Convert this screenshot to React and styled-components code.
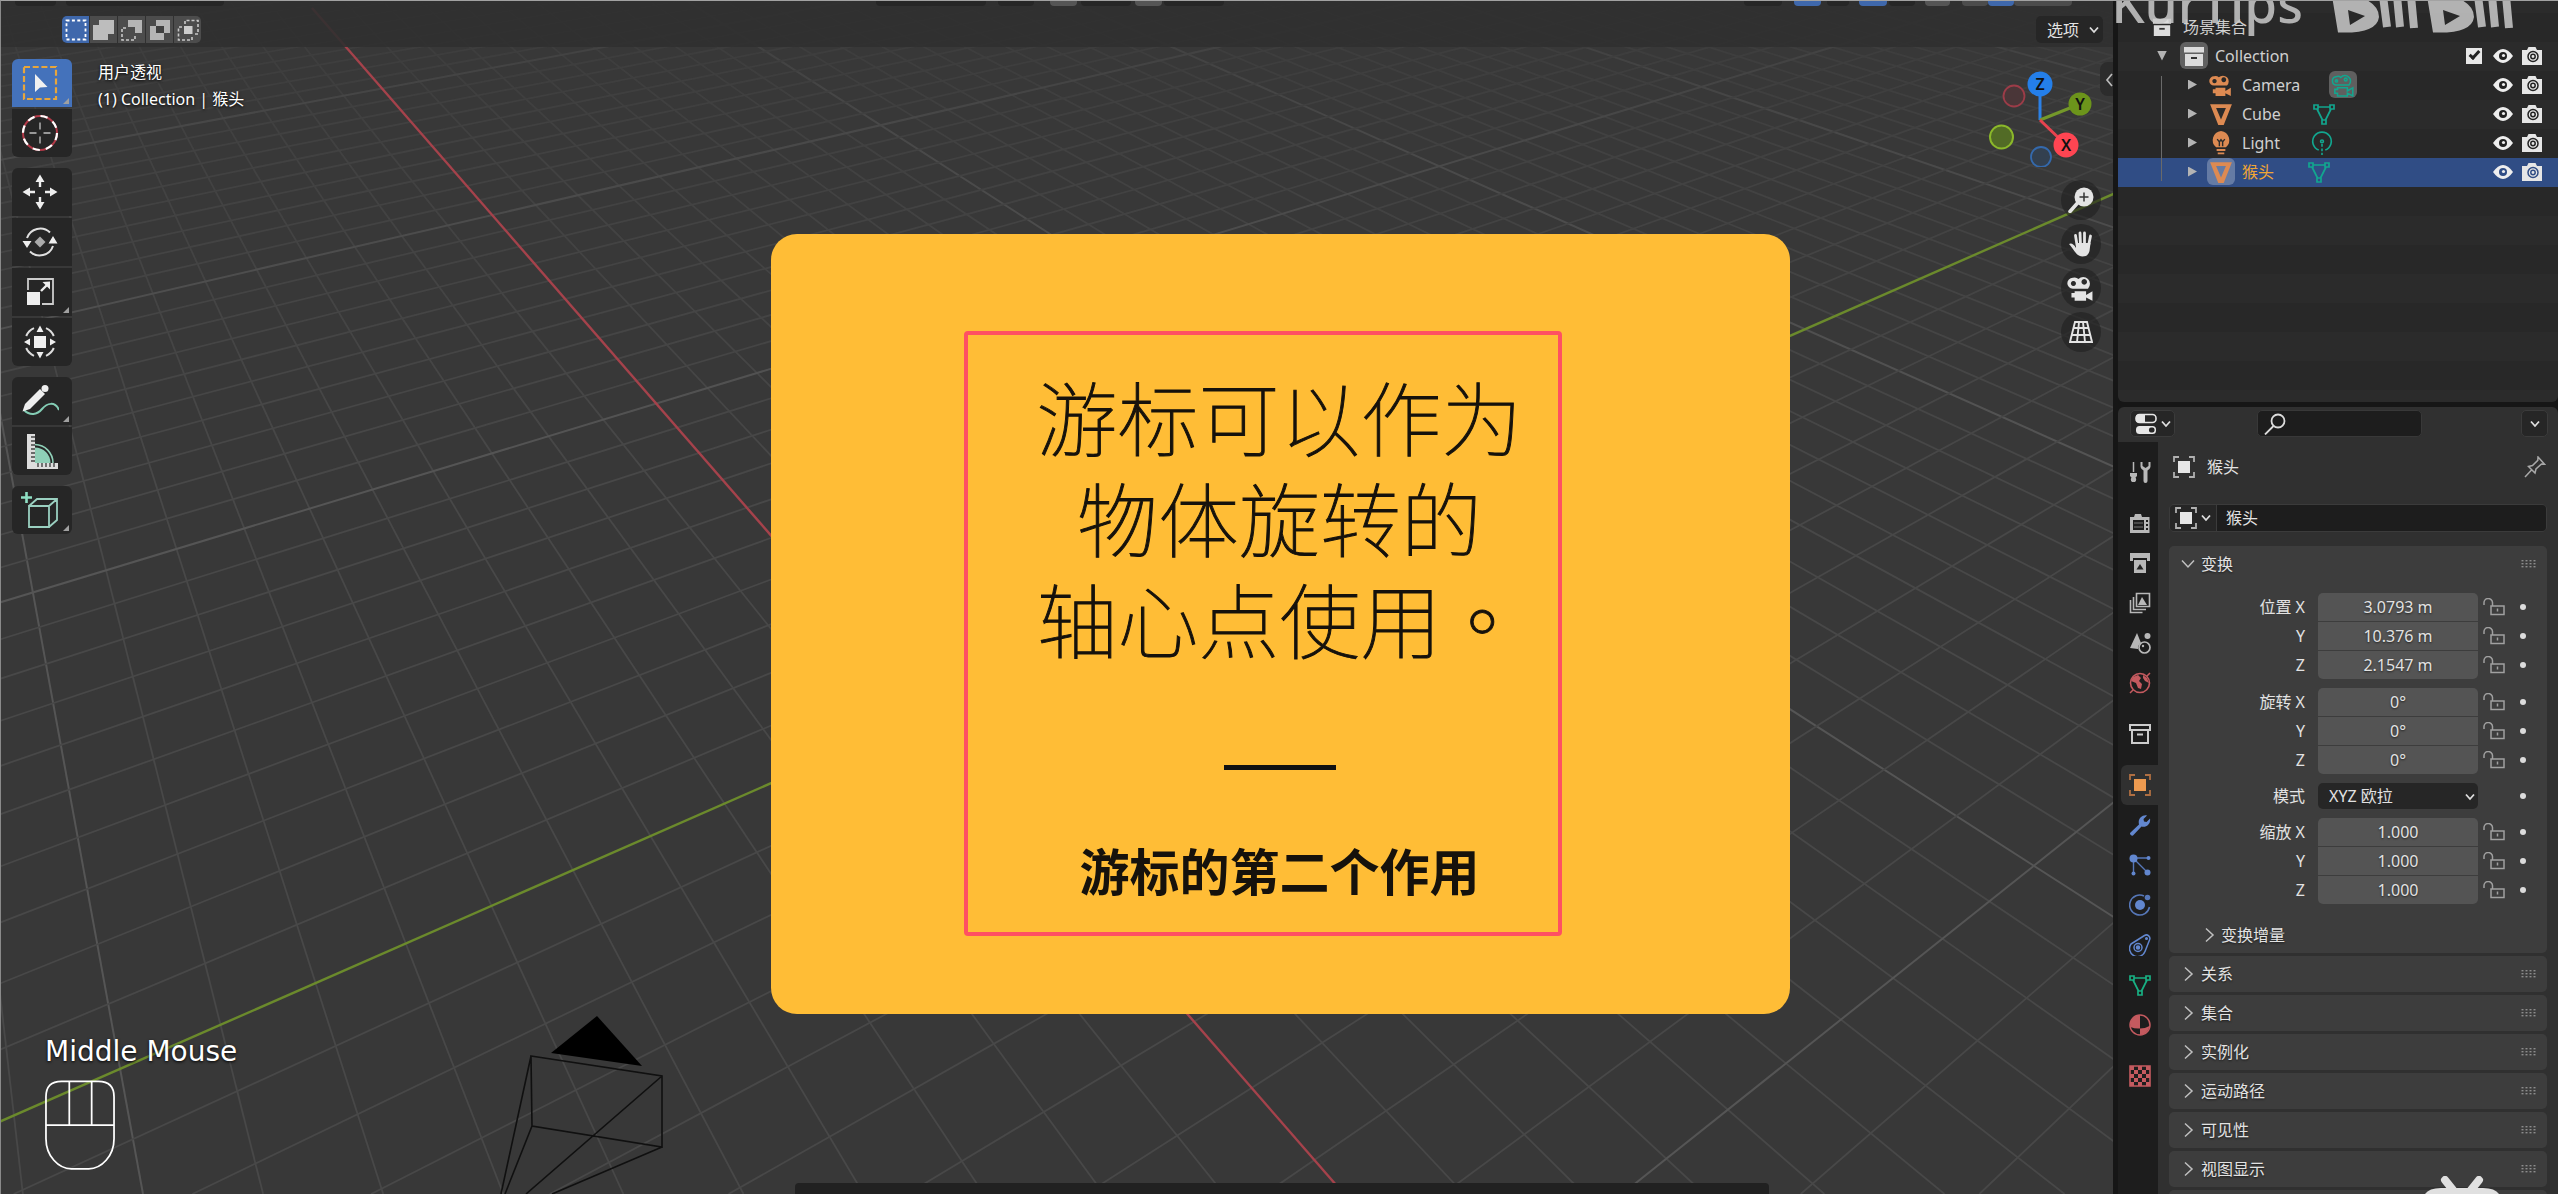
import React from "react";
import styled, { createGlobalStyle, css } from "styled-components";

const sans = `"Noto Sans", "Noto Sans CJK SC", sans-serif`;

const GlobalStyle = createGlobalStyle`
  *, *::before, *::after { box-sizing: border-box; }
  body { margin: 0; background: #161616; }
  button, input, select { font: inherit; color: inherit; border: 0; padding: 0; margin: 0; background: none; }
  ul { list-style: none; margin: 0; padding: 0; }
  svg { display: block; flex: none; }
`;

/* ---------- window ---------- */

const Window = styled.div`
  position: relative;
  display: grid;
  grid-template-columns: minmax(0, 1fr) 440px;
  gap: 5px;
  height: 100vh;
  overflow: hidden;
  border-top: 1px solid #a2a2a2;
  border-left: 1px solid #8a8a8a;
  background: #161616;
  color: #e2e2e2;
  font: 16px/24px ${sans};
`;

/* ---------- viewport ---------- */

const Viewport = styled.main`
  position: relative;
  display: flex;
  flex-direction: column;
  overflow: hidden;
  background: #383838;
`;

const Scene = styled.svg`
  position: absolute;
  left: -1px;
  top: -1px;
`;

const Header = styled.header`
  position: relative;
  background: rgba(48, 48, 48, 0.9);
  height: 46px;
`;

const MenuEdge = styled.div`
  display: flex;
  height: 5px;
`;

const MenuPiece = styled.span`
  width: ${(p) => p.$w}px;
  margin-left: ${(p) => p.$gap}px;
  height: 5px;
  border-radius: 0 0 4px 4px;
  background: ${(p) => p.$color || "#262626"};
`;

const ToolSettings = styled.div`
  display: flex;
  align-items: center;
  justify-content: space-between;
  padding: 10px 10px 0 61px;
`;

const ModeGroup = styled.div`
  display: flex;
  gap: 1px;
  border-radius: 5px;
  overflow: hidden;
`;

const ModeButton = styled.button`
  display: grid;
  place-items: center;
  width: 27px;
  height: 27px;
  background: ${(p) => (p.$on ? "#3f68ac" : "#4c4c4c")};
`;

const OptionsButton = styled.button`
  display: flex;
  align-items: center;
  gap: 10px;
  height: 27px;
  padding: 0 4px 0 11px;
  border-radius: 5px;
  background: #262626;
`;

const Stage = styled.div`
  position: relative;
  display: flex;
  flex: 1;
  padding: 12px 0 0 11px;
`;

const Tools = styled.nav`
  display: flex;
  flex-direction: column;
  gap: 11px;
`;

const ToolGroup = styled.div`
  display: flex;
  flex-direction: column;
  gap: 2px;
  border-radius: 6px;
  overflow: hidden;
`;

const ToolButton = styled.button`
  position: relative;
  display: grid;
  place-items: center;
  width: 60px;
  height: 48px;
  padding-right: 4px;
  background: ${(p) => (p.$on ? "#4472bb" : "#262626")};
  ${(p) =>
    p.$more &&
    css`
      &::after {
        content: "";
        position: absolute;
        right: 3px;
        bottom: 3px;
        border-style: solid;
        border-width: 0 0 6px 6px;
        border-color: transparent transparent #a0a0a0 transparent;
      }
    `}
`;

const ViewInfo = styled.div`
  margin-left: 26px;
  color: #fff;
  line-height: 27px;
  text-shadow: 0 1px 3px #000;
`;

const NavColumn = styled.div`
  position: absolute;
  right: 0;
  top: 0;
  width: 124px;
  display: flex;
  flex-direction: column;
  align-items: flex-end;
`;

const NavButtons = styled.div`
  display: flex;
  flex-direction: column;
  gap: 4px;
  margin: 13px 12px 0 0;
`;

const NavButton = styled.button`
  display: grid;
  place-items: center;
  width: 40px;
  height: 40px;
  border-radius: 50%;
  background: rgba(32, 32, 32, 0.6);
`;

const KeyCast = styled.div`
  position: absolute;
  left: 44px;
  bottom: 22px;
  display: flex;
  flex-direction: column;
  gap: 7px;
  color: #fff;
  font: 28px/40px "DejaVu Sans", sans-serif;
  text-shadow: 0 1px 3px #000;
`;

const TimelineEdge = styled.div`
  position: absolute;
  left: 794px;
  right: 344px;
  bottom: 0;
  height: 11px;
  border-radius: 4px 4px 0 0;
  background: #212121;
`;

/* ---------- caption card ---------- */

const Card = styled.section`
  position: absolute;
  left: 50%;
  top: 233px;
  width: 1019px;
  margin-left: -509px;
  padding: 97px 228px 78px 193px;
  border-radius: 26px;
  background: #ffbd36;
  color: #16120c;
`;

const Frame = styled.div`
  display: flex;
  flex-direction: column;
  align-items: center;
  padding: 29px 0 28px 34px;
  border: 4px solid #ff5062;
  border-radius: 4px;
`;

const Headline = styled.h1`
  margin: 0;
  font: 100 81px/101px "Noto Sans CJK SC", sans-serif;
  -webkit-text-stroke: 1px #16120c;
  text-align: center;
`;

const FullStop = styled.span`
  font-family: "Noto Sans CJK TC", sans-serif;
`;

const Rule = styled.hr`
  width: 112px;
  height: 5px;
  margin: 98px 0 64px;
  border: 0;
  background: #111;
`;

const Caption = styled.p`
  margin: 0;
  font: 700 50px/70px "Noto Sans CJK SC", sans-serif;
`;

/* ---------- right column ---------- */

const Sidebar = styled.aside`
  display: flex;
  flex-direction: column;
  gap: 5px;
  min-height: 0;
  overflow: hidden;
`;

const Outliner = styled.section`
  height: 401px;
  flex: none;
  padding-top: 12px;
  border-radius: 0 0 6px 6px;
  background: repeating-linear-gradient(#282828 0 29px, #2b2b2b 29px 58px) 0 12px, #282828;
`;

const OutRow = styled.li`
  display: flex;
  align-items: center;
  height: 29px;
  padding: 0 16px 2px ${(p) => p.$indent}px;
  background: ${(p) => (p.$on ? "#304d85" : "transparent")};
  color: ${(p) => (p.$on ? "#f0a535" : "#d0d0d0")};
`;

const Branch = styled.ul`
  position: relative;
  &::before {
    content: "";
    position: absolute;
    left: 43px;
    top: 5px;
    bottom: 6px;
    width: 1px;
    background: #6a6a6a;
  }
`;

const Twisty = styled.button`
  width: 10px;
  height: 10px;
  margin-right: ${(p) => (p.$open ? 13 : 10)}px;
  background: #b4b4b4;
  clip-path: ${(p) => (p.$open ? "polygon(0 0, 100% 0, 50% 100%)" : "polygon(10% 0, 100% 50%, 10% 100%)")};
`;

const IconBox = styled.span`
  display: grid;
  place-items: center;
  width: 28px;
  height: 27px;
  margin-right: 7px;
  border-radius: 6px;
  background: ${(p) => (p.$lit ? "rgba(255,255,255,.26)" : "transparent")};
`;

const DataBox = styled(IconBox)`
  margin: 0 0 0 ${(p) => p.$gap}px;
`;

const Toggles = styled.span`
  display: flex;
  align-items: center;
  gap: 9px;
  margin-left: auto;
  color: #e8e8e8;
`;

const PlainButton = styled.button`
  display: grid;
  place-items: center;
`;

const Check = styled.input`
  appearance: none;
  width: 16px;
  height: 16px;
  margin-right: 2px;
  background: #e8e8e8;
  display: grid;
  place-items: center;
  &::before {
    content: "";
    width: 11px;
    height: 6px;
    border: solid #222;
    border-width: 0 0 3px 3px;
    transform: translateY(-2px) rotate(-48deg);
  }
`;

const Properties = styled.section`
  display: flex;
  flex-direction: column;
  flex: 1;
  min-height: 0;
  border-radius: 6px 6px 0 0;
  background: #303030;
  overflow: hidden;
`;

const PropHeader = styled.header`
  display: flex;
  align-items: center;
  justify-content: space-between;
  flex: none;
  height: 35px;
  padding: 0 10px 2px 12px;
`;

const MiniButton = styled.button`
  display: flex;
  align-items: center;
  justify-content: center;
  gap: 4px;
  width: ${(p) => p.$w}px;
  height: 27px;
  border: 1px solid #3b3b3b;
  border-radius: 5px;
  background: #262626;
`;

const Search = styled.label`
  display: flex;
  align-items: center;
  width: 165px;
  height: 27px;
  margin-right: 18px;
  padding-left: 6px;
  border: 1px solid #383838;
  border-radius: 5px;
  background: #1d1d1d;
  input {
    width: 100%;
    min-width: 0;
  }
`;

const PropBody = styled.div`
  display: flex;
  flex: 1;
  min-height: 0;
`;

const Tabs = styled.nav`
  display: flex;
  flex-direction: column;
  gap: 11px;
  width: 40px;
  padding: 10px 0 0 3px;
  background: #1d1d1d;
`;

const TabGroup = styled.div`
  display: flex;
  flex-direction: column;
`;

const Tab = styled.button`
  display: grid;
  place-items: center;
  height: 40px;
  border-radius: 6px 0 0 6px;
  background: ${(p) => (p.$on ? "#303030" : "none")};
`;

const Content = styled.div`
  flex: 1;
  min-width: 0;
  padding: 12px 11px 0 11px;
`;

const Crumb = styled.div`
  display: flex;
  align-items: center;
  gap: 12px;
  height: 26px;
  padding: 0 1px 0 4px;
  button {
    margin-left: auto;
  }
`;

const NameRow = styled.div`
  display: flex;
  gap: 1px;
  height: 28px;
  margin: 24px 0 14px;
  border: 1px solid #3b3b3b;
  border-radius: 5px;
  overflow: hidden;
  background: #3b3b3b;
  button {
    display: flex;
    align-items: center;
    justify-content: center;
    gap: 4px;
    width: 46px;
    background: #262626;
  }
  input {
    flex: 1;
    min-width: 0;
    padding-left: 9px;
    background: #1d1d1d;
  }
`;

const Panels = styled.div`
  display: flex;
  flex-direction: column;
  gap: 3px;
`;

const Panel = styled.section`
  border-radius: 5px;
  background: #3d3d3d;
`;

const PanelHead = styled.button`
  display: flex;
  align-items: center;
  gap: 6px;
  width: 100%;
  height: 36px;
  padding: 0 11px 0 12px;
  text-align: left;
  text-shadow: 0 1px 2px #1a1a1a;
  > :last-child {
    margin-left: auto;
  }
`;

const SubHead = styled.button`
  display: flex;
  align-items: center;
  gap: 5px;
  width: 100%;
  height: 34px;
  margin-top: 15px;
  padding: 0 0 2px 33px;
  text-shadow: 0 1px 2px #1a1a1a;
`;

const Fields = styled.div`
  display: flex;
  flex-direction: column;
  gap: 9px;
  padding: 11px 21px 0 0;
`;

const FieldGroup = styled.div`
  display: flex;
  flex-direction: column;
  gap: 1px;
  input {
    border-radius: 0;
  }
  > :first-child input {
    border-radius: 5px 5px 0 0;
  }
  > :last-child input {
    border-radius: 0 0 5px 5px;
  }
`;

const FieldRow = styled.div`
  display: grid;
  grid-template-columns: 136px minmax(0, 1fr) 22px 21px;
  align-items: center;
  justify-items: stretch;
  height: ${(p) => p.$h || 28}px;
  label {
    text-align: right;
  }
`;

const NumberInput = styled.input`
  height: 28px;
  margin: 0 5px 0 13px;
  min-width: 0;
  background: #545454;
  text-align: center;
  text-shadow: 0 1px 2px #222;
`;

const SelectBox = styled.div`
  position: relative;
  margin: 0 5px 0 13px;
  select {
    display: block;
    appearance: none;
    width: 100%;
    height: 26px;
    padding: 0 24px 0 11px;
    border-radius: 5px;
    background: #262626;
  }
  svg {
    position: absolute;
    right: 3px;
    top: 10px;
    pointer-events: none;
  }
`;

const KeyDot = styled.button`
  grid-column: 4;
  justify-self: end;
  width: 6px;
  height: 6px;
  border-radius: 50%;
  background: #dcdcdc;
`;

/* ---------- watermarks ---------- */

const Watermark = styled.div`
  position: absolute;
  right: 43px;
  top: -34px;
  display: flex;
  gap: 28px;
  align-items: flex-end;
  color: rgba(200, 200, 200, 0.86);
  font: 500 53px/72px ${sans};
  pointer-events: none;
`;

const Mascot = styled.svg`
  position: absolute;
  right: 57px;
  bottom: 0;
`;

/* ---------- drawings ---------- */

const HORIZON = -554;
const BOTTOM = 1194;

function gridLines(vanishX, originX, spacing, from, to) {
  const out = [];
  for (let k = from; k <= to; k++) {
    if (k === 0) continue;
    out.push({ k, x: originX + k * spacing, vx: vanishX });
  }
  return out;
}

const redFamily = gridLines(-177, 1344, 120.1, -16, 48);
const greenFamily = gridLines(3816, -165, 178.7, -60, 14);

function Grid() {
  const draw = (l, i) => (
    <line
      key={i}
      x1={l.vx}
      y1={HORIZON}
      x2={l.x}
      y2={BOTTOM}
      stroke={l.k % 10 === 0 ? "#555555" : "#484848"}
      strokeWidth={l.k % 10 === 0 ? 2 : 1.8}
    />
  );
  return (
    <Scene width="2560" height="1194" viewBox="0 0 2560 1194" aria-hidden="true">
      <defs>
        <linearGradient id="fade" x1="0" y1="0" x2="0" y2="1">
          <stop offset="0" stopColor="#fff" stopOpacity="0.25" />
          <stop offset="0.12" stopColor="#fff" stopOpacity="0.6" />
          <stop offset="0.4" stopColor="#fff" stopOpacity="1" />
        </linearGradient>
        <mask id="far">
          <rect width="2560" height="1194" fill="url(#fade)" />
        </mask>
      </defs>
      <g mask="url(#far)">
        {redFamily.map(draw)}
        {greenFamily.map(draw)}
      </g>
      <line x1="312" y1="8" x2="1344" y2="1194" stroke="#a5424b" strokeWidth="2.4" />
      <line x1="-165" y1="1194" x2="2300" y2="112" stroke="#6b8a2c" strokeWidth="2.4" />
      <path d="M597 1016 551 1053 642 1066Z" fill="#000" />
      <path
        d="M531 1056 662 1076V1147L532 1126ZM531 1056 501 1194M532 1126 505 1194M662 1076 526 1194M662 1147 552 1194"
        fill="none"
        stroke="#101010"
        strokeWidth="1.6"
      />
    </Scene>
  );
}

const Svg = ({ s = 22, w, h, vb, children, ...rest }) => (
  <svg width={w || s} height={h || s} viewBox={vb || "0 0 22 22"} fill="none" aria-hidden="true" {...rest}>
    {children}
  </svg>
);

const ChevronDown = () => (
  <Svg w={10} h={8} vb="0 0 10 8">
    <path d="M1 1.5 5 6 9 1.5" stroke="#ddd" strokeWidth="1.8" />
  </Svg>
);
const ChevronBig = ({ open }) => (
  <Svg w={14} h={16} vb="0 0 14 16">
    <path d={open ? "M1 4.5 7 11 13 4.5" : "M4 1.5 11 8 4 14.5"} stroke="#c0c0c0" strokeWidth="1.5" />
  </Svg>
);
const Grip = () => (
  <Svg w={15} h={8} vb="0 0 15 8">
    {[0, 4, 8, 12].map((x) =>
      [0, 3, 6].map((y) => <rect key={x + "-" + y} x={x + 0.5} y={y} width="2" height="1.4" fill="#8c8c8c" />)
    )}
  </Svg>
);

const modes = [
  <path d="M1.500 1.500h19v19h-19z" stroke="#fff" strokeWidth="1.800" strokeDasharray="3 2.400" />,
  <path d="M6 1h15v14h-6v6H0V6h6z" fill="#bdbdbd" />,
  <>
    <path d="M7 1h14v13h-7V8H7z" fill="#b5b5b5" />
    <path d="M5 9H1v12h13v-5" stroke="#c8c8c8" strokeWidth="1.6" strokeDasharray="3 2" />
  </>,
  <>
    <path d="M7 1h14v13h-6v7H1V7h6z" fill="#b5b5b5" />
    <path d="M7 7h8v7H7z" fill="#404040" />
  </>,
  <>
    <path d="M7 7h8.500v8H7z" fill="#ccc" />
    <path d="M8 5V1.500h13V15h-4M5 8H1.500v13H15v-4" stroke="#c8c8c8" strokeWidth="1.6" strokeDasharray="3 2" />
  </>,
];

const toolIcons = {
  select: (
    <>
      <path d="M3 3h32v32H3z" stroke="#e8a63c" strokeWidth="2.2" strokeDasharray="6 2.700" />
      <path d="M14 10v18l5-4.500 7.500-.5z" fill="#f0f0f0" />
    </>
  ),
  cursor: (
    <>
      <circle cx="19" cy="19" r="17" stroke="#b23a48" strokeWidth="2" />
      <circle cx="19" cy="19" r="17" stroke="#fff" strokeWidth="2.2" strokeDasharray="7.300 6.050" />
      <path d="M19 8.500v7M19 22.500v7M8.500 19h7M22.500 19h7" stroke="#999" strokeWidth="1.8" />
    </>
  ),
  move: (
    <>
      <path d="M19 1.500 23.500 9h-9zM19 36.500 23.500 29h-9zM1.500 19 9 14.500v9zM36.500 19 29 14.500v9z" fill="#eee" />
      <path d="M19 9v5M19 24v5M9 19h5M24 19h5" stroke="#eee" strokeWidth="2.4" />
    </>
  ),
  rotate: (
    <>
      <path d="M6 15A14 14 0 0 1 29 9.500M32 23A14 14 0 0 1 9 28.500" stroke="#e0e0e0" strokeWidth="2" />
      <path d="M1.500 18h9L6 25zM27.500 20.500h9L32 13z" fill="#eee" />
      <path d="M19 13.500 24.500 19 19 24.500 13.500 19z" fill="#aaa" />
    </>
  ),
  scale: (
    <>
      <path d="M7 17V6h25v25H21" stroke="#ccc" strokeWidth="1.8" />
      <path d="M6 19h13v13H6z" fill="#eee" />
      <path d="M20 18 26 12" stroke="#eee" strokeWidth="2.4" />
      <path d="M29 8.500v8L21.500 9z" fill="#eee" />
    </>
  ),
  transform: (
    <>
      <path d="M13 5.200A15 15 0 0 0 5.200 13M25 5.200A15 15 0 0 1 32.800 13M13 32.800A15 15 0 0 1 5.200 25M25 32.800A15 15 0 0 0 32.800 25" stroke="#ddd" strokeWidth="2" />
      <path d="M13 13h12v12H13z" fill="#eee" />
      <path d="M19 2.500 22.500 9h-7zM19 35.500 22.500 29h-7zM3 19 9 15.500v7zM35 19 29 15.500v7z" fill="#eee" />
    </>
  ),
  annotate: (
    <>
      <path d="M3 28C9 34 16 33 21 27s13-8 17 1" stroke="#83ccb4" strokeWidth="2" />
      <path d="M1.500 29.500 4 22 19 7l5 5L9 27z" fill="#eee" />
      <circle cx="24" cy="6.500" r="3.500" fill="#eee" />
    </>
  ),
  measure: (
    <>
      <path d="M14 15.500V31h15.500A15.500 15.500 0 0 0 14 15.500z" fill="#8fd0b8" />
      <path d="M14 12.500A18.500 18.500 0 0 1 32 31" stroke="#8fd0b8" strokeWidth="1.6" />
      <path d="M6 2h8v29h23v6H6z" fill="#ddd" />
      <path d="M14 5h-4M14 9h-4M14 13h-4M14 17h-4M14 21h-4M14 25h-4M14 29h-4M17 31v4M21 31v4M25 31v4M29 31v4M33 31v4" stroke="#444" strokeWidth="1.4" />
    </>
  ),
  cube: (
    <>
      <path d="M8 15h20v21H8zM8 15l8-7h20v21l-8 7M28 15l8-7" stroke="#9ad0c0" strokeWidth="1.8" />
      <path d="M5.500 1v11M0 6.500h11" stroke="#8fe0c4" strokeWidth="2.6" />
    </>
  ),
};

const Collection = ({ s = 20, outline }) =>
  outline ? (
    <Svg s={s}>
      <path d="M1 2h20v5H1zM3 7.500v12.500h16V7.500" stroke="#ccc" strokeWidth="2" />
      <path d="M8 11.500h6" stroke="#ccc" strokeWidth="2" />
    </Svg>
  ) : (
    <Svg s={s}>
      <path d="M1 2h20v5.500H1zM2 9h18v12H2z" fill="#dcdcdc" />
      <path d="M8 13h6" stroke="#333" strokeWidth="2" />
    </Svg>
  );

const CameraData = ({ s = 24, color, outline }) => (
  <Svg s={s} stroke={outline ? color : "none"} strokeWidth="1.4">
    <g fill={outline ? "none" : color}>
      {outline ? (
        <>
          <path d="M4.500 3.500a4 4 0 0 1 4.500.5 5 5 0 1 1 7.500 7H4.500a3.800 3.800 0 0 1 0-7.500z" />
          <circle cx="5" cy="7.300" r="1" />
          <circle cx="13.500" cy="6" r="1.300" />
        </>
      ) : (
        <path
          fillRule="evenodd"
          d="M4.500 3a4.200 4.200 0 0 1 4.500 1 5.200 5.200 0 1 1 7.500 7.500H4.500a4.200 4.200 0 0 1 0-8.500zM5 5.500a2 2 0 1 0 .1 0zM13.500 4a2.200 2.200 0 1 0 .1 0z"
        />
      )}
      <path d="M6 13.500h9v3l5-3v7.500l-5-2.500V21H6v-2.500H3.500V15H6z" />
    </g>
  </Svg>
);
const MeshTri = ({ s = 24 }) => (
  <Svg s={s}>
    <path fillRule="evenodd" d="M1 2h20l-7.500 19h-5zM6.500 5.500 11 16l4.500-10.500z" fill="#dd8a52" />
  </Svg>
);
const MeshData = ({ s = 22, color = "#12a68f" }) => (
  <Svg s={s} stroke={color} strokeWidth="1.700">
    <path d="M1 2h4v4H1zM17 2h4v4h-4zM9 17h4v4H9zM5 4h12M4 6l5.500 11M18 6l-5.500 11" />
  </Svg>
);
const Bulb = () => (
  <Svg s={24}>
    <path d="M11 0a8.500 8.500 0 0 1 4.500 15H6.500A8.500 8.500 0 0 1 11 0z" fill="#dd8a52" />
    <path d="M7 17.500h8M8 20.500h6" stroke="#dd8a52" strokeWidth="1.800" />
    <path d="M7.500 7.500 9.500 10 11 8l1.500 2 2-2.500M9.500 10v4M12.500 10v4" stroke="#2b2b2b" strokeWidth="1.300" />
  </Svg>
);
const LightData = () => (
  <Svg s={24} stroke="#12a68f" strokeWidth="1.500">
    <path d="M8 17.500a8.500 8.500 0 1 1 6 0" />
    <circle cx="11" cy="9.500" r="1.300" />
    <path d="M11 12v10" strokeDasharray="2.500 1.500" />
  </Svg>
);
const Eye = ({ pupil = "#222" }) => (
  <Svg w={20} h={18} vb="0 0 20 18">
    <path d="M0 9Q10-5 20 9 10 23 0 9z" fill="#eee" />
    <circle cx="10" cy="9" r="4" fill={pupil} />
    <circle cx="10.500" cy="8.500" r="1.600" fill="#eee" />
  </Svg>
);
const Photo = ({ pupil = "#222" }) => (
  <Svg w={20} h={18} vb="0 0 20 18">
    <path d="M0 3h5l1.500-3h7L15 3h5v15H0z" fill="#e6e6e6" />
    <circle cx="11" cy="9.500" r="5" stroke={pupil} strokeWidth="1.500" />
    <circle cx="11" cy="9.500" r="2.200" stroke={pupil} strokeWidth="1.500" />
  </Svg>
);
const ObjectIcon = ({ frame = "#b0b0b0", fill = "#e6e6e6" }) => (
  <Svg>
    <path d="M1 6V1h5M16 1h5v5M21 16v5h-5M6 21H1v-5" stroke={frame} strokeWidth="1.800" />
    <path d="M5 5h12v12H5z" fill={fill} />
  </Svg>
);
const Pin = () => (
  <Svg stroke="#a8a8a8" strokeWidth="1.500">
    <path d="M1 21l7-7.500M4.500 10.500 11 17l1-4 5.500-5 3 .2L14 1l-.2 3.300L8.500 9.500z" />
  </Svg>
);
const Lock = () => (
  <Svg w={22} h={18} vb="0 0 22 18">
    <path d="M1 7V5a4 4 0 0 1 8.500-.500V8" stroke="#a0a0a0" strokeWidth="1.500" />
    <path d="M8 8h13v8.500H8z" stroke="#a0a0a0" strokeWidth="1.500" />
    <path d="M14.500 10.500v3" stroke="#a0a0a0" strokeWidth="1.500" />
  </Svg>
);

const G = "#b8b8b8";
const R = "#c45a5f";
const B = "#6287cf";
const tabIcons = {
  tool: (
    <Svg>
      <path d="M4.500 1v10" stroke={G} strokeWidth="1.500" />
      <path d="M1 12h7v3l-1.500 1.500A3.500 3.500 0 0 1 6 21H3a3.500 3.500 0 0 1-.5-4.500L1 15z" fill={G} />
      <path d="M11.500 1v4.500c0 2 2 3 3 4V20a2 2 0 0 0 4 0V9.500c1-1 3-2 3-4V1l-2 0v4l-3 2-3-2V1z" fill={G} />
    </Svg>
  ),
  render: (
    <Svg>
      <path fillRule="evenodd" d="M1 5h4l1-3h6l1 3h7.500v16H1zM4 8v10h11V8zM17 8v2h2V8zM17 12v2h2v-2zM17 16v2h2v-2z" fill={G} />
      <path d="M5 11h9M5 15h9" stroke="#777" strokeWidth="1" />
    </Svg>
  ),
  output: (
    <Svg>
      <path d="M1 1h20v8h-3V6H4v3H1zM5 8h12v13H5z" fill={G} />
      <path d="M7.500 17.500 11 12l3.500 5.500z" fill="#222" />
    </Svg>
  ),
  layers: (
    <Svg>
      <path d="M7.500 1.500h13v13h-13zM4.500 5v12.500H17M1.500 8v12.500H13.500" stroke={G} strokeWidth="1.600" />
      <path d="M9 13 13 5l5 8z" fill={G} />
    </Svg>
  ),
  scene: (
    <Svg>
      <path d="M8 1 12 11a6 6 0 0 0-3 6L1 16z" fill={G} />
      <circle cx="18.500" cy="4" r="3" fill={G} />
      <circle cx="15.500" cy="15.500" r="5.500" stroke={G} strokeWidth="1.700" />
      <circle cx="14" cy="14" r="1.200" fill={G} />
    </Svg>
  ),
  world: (
    <Svg>
      <circle cx="11" cy="11" r="9.500" stroke={R} strokeWidth="1.600" />
      <path d="M4 5 9 3l3 3-2 3 3 3-1 5-3-1-2-5-5-2zM14 3l4 3 2 5-4-2-2-3z" fill={R} />
      <path d="M18 4l3-3M1 21l3-3" stroke={R} strokeWidth="1.500" />
    </Svg>
  ),
  wrench: (
    <Svg>
      <path d="M1 19 10 10.500C8.500 5 13 .5 18 1.500L14.500 5l.5 2.500 2.500.5L21 4.500c1 5-3.500 9.500-8.500 8L4 21.500A2.300 2.300 0 0 1 1 19z" fill={B} />
    </Svg>
  ),
  particles: (
    <Svg>
      <path d="M5 4h14M4.500 5v14M6 6l12 12" stroke="#5677b8" strokeWidth="1.400" />
      <circle cx="4.500" cy="4.500" r="4" fill={B} />
      <circle cx="19.500" cy="4" r="2" fill={B} />
      <circle cx="4.500" cy="19.500" r="2" fill={B} />
      <circle cx="18.500" cy="18.500" r="3" fill={B} />
    </Svg>
  ),
  physics: (
    <Svg>
      <path d="M15 2A10 10 0 1 0 20.500 13" stroke="#5677b8" strokeWidth="1.600" />
      <circle cx="11" cy="11" r="5" fill={B} />
      <circle cx="18.500" cy="3.500" r="2.800" fill="#5677b8" />
    </Svg>
  ),
  constraints: (
    <Svg stroke={B} strokeWidth="1.500">
      <path d="M2 10 15.500 1.500a3.500 3.500 0 0 1 5 4.500L16 17.500A8 8 0 1 1 2 10z" />
      <circle cx="9" cy="13.500" r="4" />
      <circle cx="9" cy="13.500" r="1.500" fill={B} />
      <circle cx="17.500" cy="4.500" r=".8" />
    </Svg>
  ),
  mesh: <MeshData color="#18b083" />,
  material: (
    <Svg>
      <circle cx="11" cy="11" r="10" stroke={R} strokeWidth="1.500" />
      <path d="M11 1A10 10 0 0 0 1.500 13Q6 15 11 14.500zM11 14.500Q16 14.500 20.500 12A10 10 0 0 1 11 21z" fill={R} />
    </Svg>
  ),
  texture: (
    <Svg>
      <path d="M1 1h20v20H1z" stroke={R} strokeWidth="1.600" />
      {[0, 1, 2, 3, 4].map((r) =>
        [0, 1, 2, 3, 4].map((c) =>
          (r + c) % 2 === 0 ? <rect key={r + "" + c} x={1 + c * 4} y={1 + r * 4} width="4" height="4" fill={R} /> : null
        )
      )}
    </Svg>
  ),
};

const GizmoText = styled.text`
  font: 600 16px ${sans};
  fill: #111;
  text-anchor: middle;
`;

function Gizmo() {
  return (
    <svg width="124" height="120" viewBox="1989 47 124 120" role="img" aria-label="XYZ">
      <path d="M2114 62h-6a8 8 0 0 0-8 8v18a8 8 0 0 0 8 8h6z" fill="#2c2c2c" />
      <path d="M2112 74l-5 6 5 6" stroke="#bbb" strokeWidth="1.700" fill="none" />
      <path d="M2040 120V84" stroke="#2b80e6" strokeWidth="3" />
      <path d="M2040 120L2080 104" stroke="#74982a" strokeWidth="3" />
      <path d="M2040 120L2066 145" stroke="#e8434f" strokeWidth="3" />
      <circle cx="2014" cy="96" r="10.500" fill="#4a3638" stroke="#9c3c48" strokeWidth="1.800" />
      <circle cx="2001.500" cy="137" r="11.500" fill="#526b26" stroke="#8bb82a" strokeWidth="2" />
      <circle cx="2041" cy="157" r="10" fill="#33404f" stroke="#3469ac" strokeWidth="1.800" />
      <circle cx="2040" cy="84" r="12.500" fill="#247fea" />
      <circle cx="2080" cy="104" r="11.500" fill="#6c941b" />
      <circle cx="2066" cy="145" r="12.500" fill="#ff4552" />
      <GizmoText x="2040" y="90">Z</GizmoText>
      <GizmoText x="2080" y="110">Y</GizmoText>
      <GizmoText x="2066" y="151">X</GizmoText>
    </svg>
  );
}

const navIcons = [
  [
    "缩放",
    <Svg s={26} vb="0 0 26 26">
      <circle cx="16" cy="10" r="9.500" fill="#e4e4e4" />
      <path d="M2 24.500 9.500 16" stroke="#e4e4e4" strokeWidth="3.500" strokeLinecap="round" />
      <path d="M16 5.500v9M11.500 10h9" stroke="#333" strokeWidth="1.500" />
    </Svg>,
  ],
  [
    "平移",
    <Svg s={26} vb="0 0 26 26">
      <path d="M9 14 7.500 4.500M12.500 14 12 2M16.500 14V2M20.500 15 22.500 5" stroke="#e4e4e4" strokeWidth="2.800" strokeLinecap="round" />
      <path d="M1 13c2-1.500 5 0 7 4V12h14.500L21.500 20c-1 4-3.500 5.500-7 5.500C8 25.500 6 18 1 13z" fill="#e4e4e4" />
    </Svg>,
  ],
  ["摄像机", <CameraData s={28} color="#e4e4e4" />],
  [
    "透视",
    <Svg s={24} vb="0 0 24 24">
      <path d="M6 2h12l5 20H1zM4.500 8h15M3 15h18M10 2 8 22M14 2l2 20" stroke="#e4e4e4" strokeWidth="1.900" />
    </Svg>,
  ],
];

/* ---------- sections ---------- */

const toolGroups = [
  [["select", "框选", true, true], ["cursor", "游标"]],
  [["move", "移动"], ["rotate", "旋转"], ["scale", "缩放", false, true], ["transform", "变换"]],
  [["annotate", "标注", false, true], ["measure", "测量"]],
  [["cube", "添加立方体", false, true]],
];

const menuPieces = [
  [41, 14], [158, 10], [110, 652], [36, 12], [27, 16, "#555"], [50, 4], [27, 4, "#555"], [60, 2],
  [38, 520], [27, 12, "#3f68ac"], [22, 6], [28, 10, "#3f68ac"], [26, 2], [25, 10, "#555"],
  [26, 12, "#4c4c4c"], [26, 0, "#3f68ac"], [58, 0, "#4c4c4c"],
];

function ViewportArea() {
  return (
    <Viewport>
      <Grid />
      <Header>
        <MenuEdge>
          {menuPieces.map(([w, gap, color], i) => (
            <MenuPiece key={i} $w={w} $gap={gap} $color={color} />
          ))}
        </MenuEdge>
        <ToolSettings>
          <ModeGroup>
            {modes.map((m, i) => (
              <ModeButton key={i} $on={i === 0} aria-label={`选择模式 ${i + 1}`}>
                <Svg>{m}</Svg>
              </ModeButton>
            ))}
          </ModeGroup>
          <OptionsButton>
            选项 <ChevronDown />
          </OptionsButton>
        </ToolSettings>
      </Header>
      <Stage>
        <Tools>
          {toolGroups.map((group, i) => (
            <ToolGroup key={i}>
              {group.map(([id, label, on, more]) => (
                <ToolButton key={id} aria-label={label} $on={on} $more={more}>
                  <Svg s={38} vb="0 0 38 38">{toolIcons[id]}</Svg>
                </ToolButton>
              ))}
            </ToolGroup>
          ))}
        </Tools>
        <ViewInfo>
          <div>用户透视</div>
          <div>(1) Collection | 猴头</div>
        </ViewInfo>
        <NavColumn>
          <Gizmo />
          <NavButtons>
            {navIcons.map(([label, icon]) => (
              <NavButton key={label} aria-label={label}>
                {icon}
              </NavButton>
            ))}
          </NavButtons>
        </NavColumn>
      </Stage>
      <TimelineEdge />
      <KeyCast>
        <span>Middle Mouse</span>
        <svg width="70" height="93" viewBox="0 0 72 93" fill="none" stroke="#fff" strokeWidth="1.800">
          <path d="M1 17Q1 1 17 1H55Q71 1 71 17V60C71 78 58 91 45 91H27C14 91 1 78 1 60ZM1 46H71M25 1V46M48 1V46" />
        </svg>
      </KeyCast>
    </Viewport>
  );
}

const objects = [
  { name: "Camera", icon: <CameraData color="#dd8a52" />, data: <CameraData color="#12a68f" outline />, gap: 29, litData: true },
  { name: "Cube", icon: <MeshTri />, data: <MeshData />, gap: 29 },
  { name: "Light", icon: <Bulb />, data: <LightData />, gap: 28 },
  { name: "猴头", icon: <MeshTri />, data: <MeshData />, gap: 31, on: true },
];

const RowToggles = ({ name, pupil, children }) => (
  <Toggles>
    {children}
    <PlainButton aria-label={`${name} 可见`}>
      <Eye pupil={pupil} />
    </PlainButton>
    <PlainButton aria-label={`${name} 渲染`}>
      <Photo pupil={pupil} />
    </PlainButton>
  </Toggles>
);

function OutlinerArea() {
  return (
    <Outliner>
      <ul>
        <OutRow $indent={30}>
          <IconBox>
            <Collection />
          </IconBox>
          场景集合
        </OutRow>
        <OutRow $indent={39}>
          <Twisty $open aria-label="折叠 Collection" />
          <IconBox $lit>
            <Collection s={22} />
          </IconBox>
          Collection
          <RowToggles name="Collection">
            <Check type="checkbox" defaultChecked aria-label="启用 Collection" />
          </RowToggles>
        </OutRow>
      </ul>
      <Branch>
        {objects.map((o) => (
          <OutRow key={o.name} $indent={69} $on={o.on}>
            <Twisty aria-label={`展开 ${o.name}`} />
            <IconBox $lit={o.on}>{o.icon}</IconBox>
            {o.name}
            <DataBox $gap={o.gap} $lit={o.litData}>
              {o.data}
            </DataBox>
            <RowToggles name={o.name} pupil={o.on ? "#304d85" : undefined} />
          </OutRow>
        ))}
      </Branch>
    </Outliner>
  );
}

const tabGroups = [
  [["tool", "工具"]],
  [["render", "渲染"], ["output", "输出"], ["layers", "视图层"], ["scene", "场景"], ["world", "世界"]],
  [["collection", "集合"]],
  [
    ["object", "物体"], ["wrench", "修改器"], ["particles", "粒子"], ["physics", "物理"],
    ["constraints", "约束"], ["mesh", "数据"], ["material", "材质"],
  ],
  [["texture", "纹理"]],
];

const transforms = [
  { id: "loc", label: "位置", values: ["3.0793 m", "10.376 m", "2.1547 m"] },
  { id: "rot", label: "旋转", values: ["0°", "0°", "0°"] },
  { id: "scale", label: "缩放", values: ["1.000", "1.000", "1.000"] },
];

const VectorFields = ({ id, label, values }) => (
  <FieldGroup>
    {values.map((v, i) => {
      const axis = "XYZ"[i];
      return (
        <FieldRow key={axis}>
          <label htmlFor={id + axis}>{i === 0 ? `${label} ${axis}` : axis}</label>
          <NumberInput id={id + axis} defaultValue={v} />
          <PlainButton aria-label={`锁定 ${label} ${axis}`}>
            <Lock />
          </PlainButton>
          <KeyDot aria-label={`${label} ${axis} 关键帧`} />
        </FieldRow>
      );
    })}
  </FieldGroup>
);

const closedPanels = ["关系", "集合", "实例化", "运动路径", "可见性", "视图显示", ""];

function PropertiesArea() {
  return (
    <Properties>
      <PropHeader>
        <MiniButton $w={45} aria-label="编辑器类型">
          <Svg>
            <rect x="1" y="1.500" width="20" height="8" rx="3.500" stroke="#e6e6e6" strokeWidth="1.600" />
            <path d="M3 1.500h7v8H3a2 2 0 0 1-2-2v-4a2 2 0 0 1 2-2z" fill="#e6e6e6" />
            <rect x="1" y="13" width="20" height="8" rx="3.500" fill="#e6e6e6" />
            <rect x="14" y="14.500" width="5.500" height="5" rx="2" fill="#262626" />
          </Svg>
          <ChevronDown />
        </MiniButton>
        <Search>
          <Svg stroke="#dcdcdc" strokeWidth="1.800">
            <circle cx="14" cy="8" r="6.500" />
            <path d="M9.500 13 1 21.500" />
          </Svg>
          <input type="search" aria-label="搜索" />
        </Search>
        <MiniButton $w={27} aria-label="选项">
          <ChevronDown />
        </MiniButton>
      </PropHeader>
      <PropBody>
        <Tabs>
          {tabGroups.map((group, i) => (
            <TabGroup key={i}>
              {group.map(([id, label]) => (
                <Tab key={id} aria-label={label} $on={id === "object"}>
                  {id === "object" ? (
                    <ObjectIcon frame="#b06f42" fill="#ec9a50" />
                  ) : id === "collection" ? (
                    <Collection s={22} outline />
                  ) : (
                    tabIcons[id]
                  )}
                </Tab>
              ))}
            </TabGroup>
          ))}
        </Tabs>
        <Content>
          <Crumb>
            <ObjectIcon />
            猴头
            <PlainButton aria-label="固定">
              <Pin />
            </PlainButton>
          </Crumb>
          <NameRow>
            <button aria-label="浏览物体">
              <ObjectIcon />
              <ChevronDown />
            </button>
            <input aria-label="名称" defaultValue="猴头" />
          </NameRow>
          <Panels>
            <Panel>
              <PanelHead>
                <ChevronBig open />
                变换
                <Grip />
              </PanelHead>
              <Fields>
                <VectorFields {...transforms[0]} />
                <VectorFields {...transforms[1]} />
                <FieldRow $h={26}>
                  <label htmlFor="mode">模式</label>
                  <SelectBox>
                    <select id="mode" defaultValue="xyz">
                      <option value="xyz">XYZ 欧拉</option>
                    </select>
                    <ChevronDown />
                  </SelectBox>
                  <KeyDot aria-label="模式 关键帧" />
                </FieldRow>
                <VectorFields {...transforms[2]} />
              </Fields>
              <SubHead>
                <ChevronBig />
                变换增量
              </SubHead>
            </Panel>
            {closedPanels.map((name) => (
              <Panel key={name}>
                <PanelHead aria-label={name || "自定义属性"}>
                  <ChevronBig />
                  {name}
                  <Grip />
                </PanelHead>
              </Panel>
            ))}
          </Panels>
        </Content>
      </PropBody>
    </Properties>
  );
}

export default function App() {
  return (
    <Window>
      <GlobalStyle />
      <ViewportArea />
      <Sidebar>
        <OutlinerArea />
        <PropertiesArea />
      </Sidebar>
      <Card>
        <Frame>
          <Headline>
            游标可以作为
            <br />
            物体旋转的
            <br />
            轴心点使用<FullStop lang="zh-TW">。</FullStop>
          </Headline>
          <Rule />
          <Caption>游标的第二个作用</Caption>
        </Frame>
      </Card>
      <Watermark>
        <span>KurTips</span>
        <svg width="184" height="72" viewBox="0 -33 184 72" fill="currentColor" role="img" aria-label="bilibili">
          {[0, 95].map((dx) => (
            <g key={dx} transform={`translate(${dx} 0)`}>
              <path fillRule="evenodd" d="M1 -4 7 32.500Q46 34 48 17 48 3 26 -4zM17 10l2 15 15-9z" />
              <path d="M52-4 56 27M66-4 69 27M80-4 83 28" stroke="currentColor" strokeWidth="8" />
            </g>
          ))}
        </svg>
      </Watermark>
      <Mascot width="78" height="18" viewBox="0 0 78 18" aria-hidden="true">
        <path d="M22 4 30 14M56 4 48 14" stroke="#e0e0e0" strokeWidth="8" strokeLinecap="round" />
        <path d="M2 18Q6 12 18 12H60Q72 12 76 18z" fill="#e0e0e0" />
      </Mascot>
    </Window>
  );
}
